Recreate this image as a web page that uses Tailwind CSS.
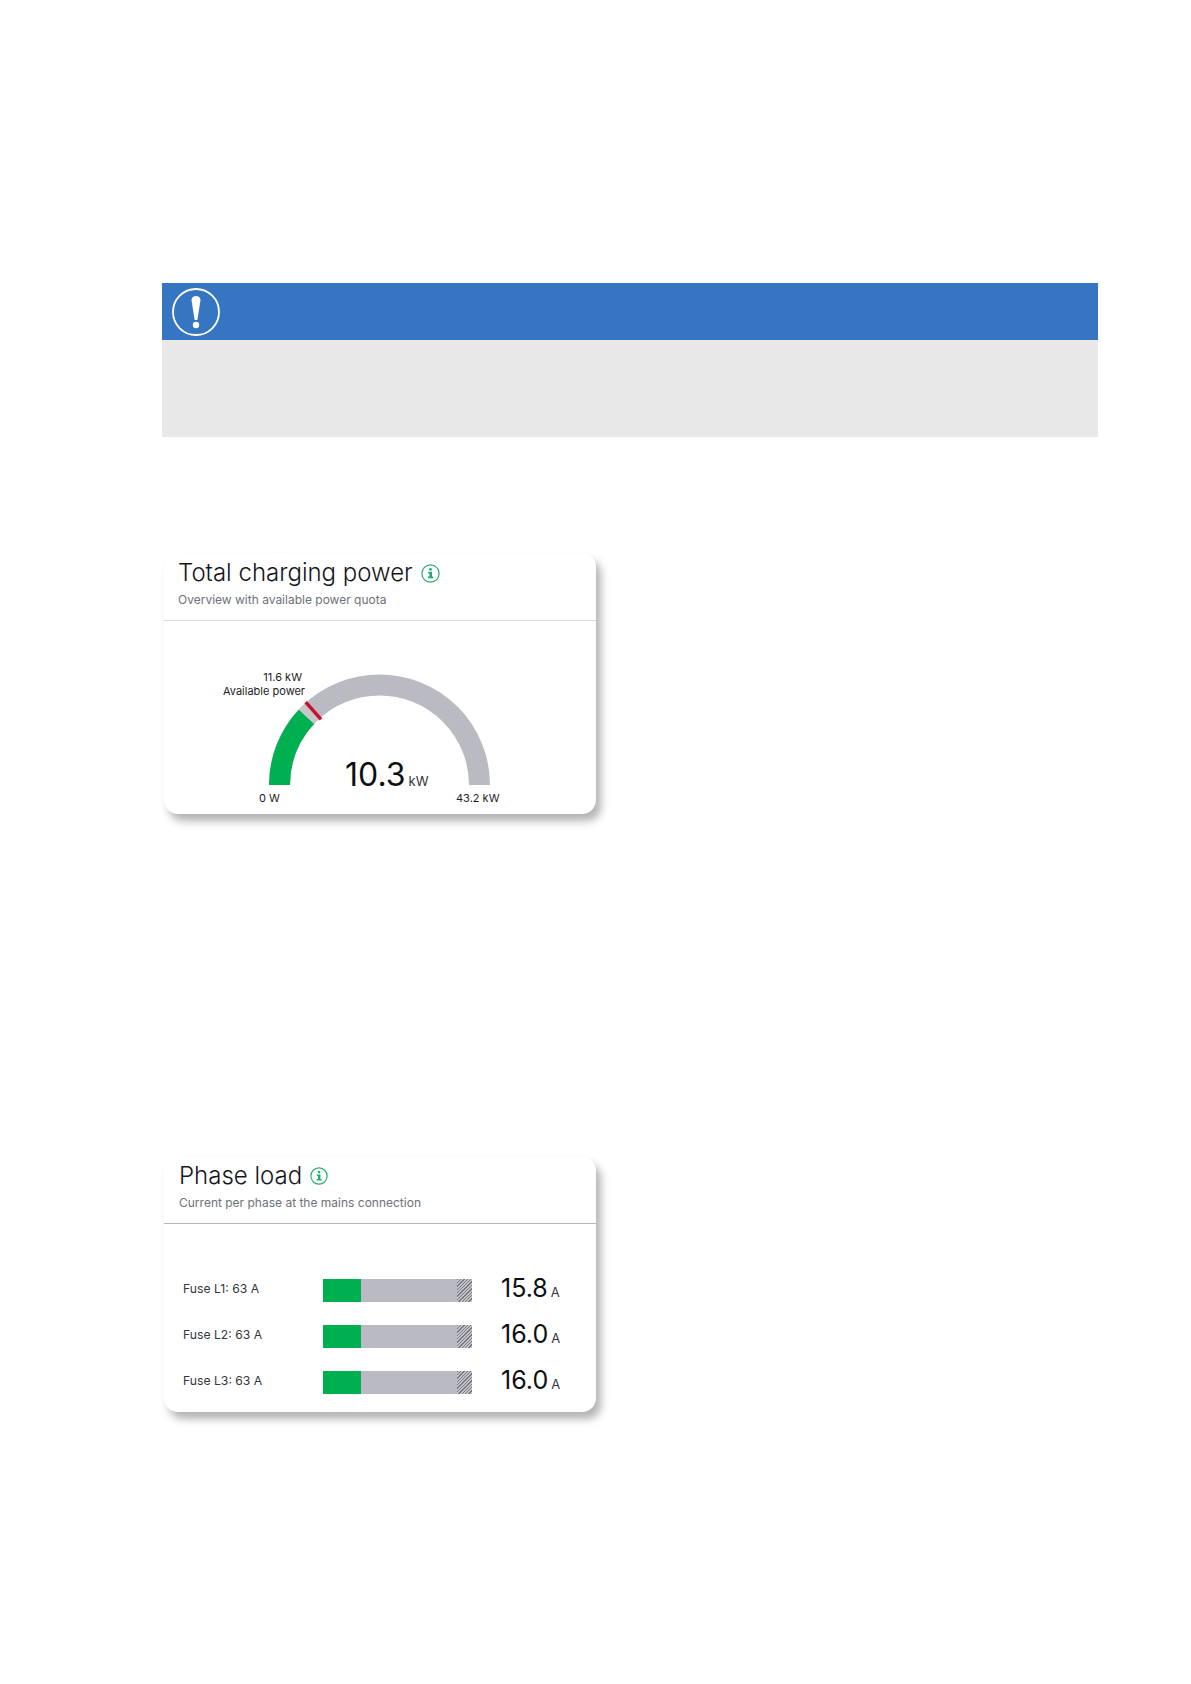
<!DOCTYPE html>
<html lang="en">
<head>
    <meta charset="UTF-8">
    <meta name="viewport" content="width=device-width, initial-scale=1.0">
    <title>Charging dashboard</title>
    <script src="https://cdn.jsdelivr.net/npm/@tailwindcss/browser@4"></script>
</head>
<body class="bg-white font-['Inter',sans-serif] h-[1684px] overflow-hidden pl-[162px] pt-[283px]">
    <!-- Notice -->
    <div class="w-[936px]">
        <div class="h-[57px] bg-[#3575c2] flex items-center pl-[10px]">
            <svg class="w-[48px] h-[48px]" viewBox="0 0 48 48">
                <circle cx="24" cy="24" r="23" fill="none" stroke="#fff" stroke-width="1.8"/>
                <path d="M19.5 12 C19.5 6.5 28.5 6.5 28.5 12 L25.4 32 H22.6 Z" fill="#fff"/>
                <circle cx="24" cy="37" r="3.2" fill="#fff"/>
            </svg>
        </div>
        <div class="h-[97px] bg-[#e8e8e8]"></div>
    </div>

    <!-- Total charging power -->
    <div class="mt-[116px] ml-[2px] w-[432px] h-[261px] bg-white rounded-[14px] shadow-[5px_7px_9px_rgba(0,0,0,0.3)]">
        <div class="h-[68px] border-b border-[#d9d9dc] pl-[14px] pt-[4px]">
            <div class="flex items-center h-[32px] gap-[8px]">
                <h2 class="text-[24px] font-light text-[#14161c] leading-[32px]">Total charging power</h2>
                <svg class="w-[19px] h-[19px]" viewBox="0 0 19 19">
                    <circle cx="9.5" cy="9.5" r="8.6" fill="none" stroke="#1fae6e" stroke-width="1.2"/>
                    <circle cx="9.5" cy="5.4" r="1.4" fill="#1fae6e"/>
                    <path d="M7.2 7.8 H11 V12.6 H12.2 V14.2 H7 V12.6 H8.4 V9.4 H7.2 Z" fill="#1fae6e"/>
                </svg>
            </div>
            <p class="text-[12px] text-[#6d7178] leading-[16px] mt-[3px]">Overview with available power quota</p>
        </div>
        <div class="relative h-[193px]">
            <svg class="absolute left-[105px] top-[54px] w-[221px] h-[110px] overflow-visible" viewBox="0 0 221 110">
                <path d="M10.5 110 A100 100 0 0 1 210.5 110" fill="none" stroke="#b9bac2" stroke-width="21"/>
                <path d="M37.4 41.8 A100 100 0 0 1 44.2 35.3" fill="none" stroke="#c6c7cc" stroke-width="21"/>
                <path d="M10.5 110 A100 100 0 0 1 37.4 41.8" fill="none" stroke="#00b050" stroke-width="21"/>
                <line x1="36.7" y1="27.1" x2="52" y2="44.3" stroke="#c8102e" stroke-width="3.4"/>
            </svg>
            <div class="absolute right-[291px] top-[49px] text-right text-[11px] leading-[14px] text-[#1b1d22] whitespace-nowrap">
                <div class="pr-[3px]">11.6 kW</div>
                <div>Available power</div>
            </div>
            <div class="absolute left-[181px] top-[134px] flex items-baseline gap-[3px] text-[#0d0f14]">
                <span class="text-[32px] leading-[40px]">10.3</span>
                <span class="text-[13px] text-[#33363c]">kW</span>
            </div>
            <span class="absolute left-[95px] top-[170px] text-[11px] leading-[15px] text-[#1b1d22]">0 W</span>
            <span class="absolute left-[292px] top-[170px] text-[11px] leading-[15px] text-[#1b1d22]">43.2 kW</span>
        </div>
    </div>

    <!-- Phase load -->
    <div class="mt-[343px] ml-[2px] w-[432px] h-[255px] bg-white rounded-[14px] shadow-[5px_7px_9px_rgba(0,0,0,0.3)]">
        <div class="h-[67px] border-b border-[#b5b6ba] pl-[15px] pt-[3px]">
            <div class="flex items-center h-[32px] gap-[8px]">
                <h2 class="text-[24px] font-light text-[#14161c] leading-[32px]">Phase load</h2>
                <svg class="w-[18px] h-[18px]" viewBox="0 0 19 19">
                    <circle cx="9.5" cy="9.5" r="8.6" fill="none" stroke="#1fae6e" stroke-width="1.2"/>
                    <circle cx="9.5" cy="5.4" r="1.4" fill="#1fae6e"/>
                    <path d="M7.2 7.8 H11 V12.6 H12.2 V14.2 H7 V12.6 H8.4 V9.4 H7.2 Z" fill="#1fae6e"/>
                </svg>
            </div>
            <p class="text-[12px] text-[#6d7178] leading-[16px] mt-[3px]">Current per phase at the mains connection</p>
        </div>
        <div class="pt-[55px] pl-[19px] flex flex-col gap-[23px]">
            <div class="flex items-center h-[23px]">
                <span class="w-[140px] text-[12.2px] text-[#33363c] -mt-[2px]">Fuse L1: 63 A</span>
                <div class="flex w-[149px] h-[23px] bg-[#b9bac2]">
                    <div class="w-[38px] bg-[#00b050]"></div>
                    <div class="ml-auto w-[15px] bg-[repeating-linear-gradient(135deg,#77787e_0,#77787e_1px,#c4c5ca_1px,#c4c5ca_2.4px)]"></div>
                </div>
                <div class="ml-[29px] flex items-baseline gap-[3px] -mt-[5px] text-[#0d0f14]">
                    <span class="text-[25px] leading-[30px]">15.8</span>
                    <span class="text-[13px] text-[#33363c]">A</span>
                </div>
            </div>
            <div class="flex items-center h-[23px]">
                <span class="w-[140px] text-[12.2px] text-[#33363c] -mt-[2px]">Fuse L2: 63 A</span>
                <div class="flex w-[149px] h-[23px] bg-[#b9bac2]">
                    <div class="w-[38px] bg-[#00b050]"></div>
                    <div class="ml-auto w-[15px] bg-[repeating-linear-gradient(135deg,#77787e_0,#77787e_1px,#c4c5ca_1px,#c4c5ca_2.4px)]"></div>
                </div>
                <div class="ml-[29px] flex items-baseline gap-[3px] -mt-[5px] text-[#0d0f14]">
                    <span class="text-[25px] leading-[30px]">16.0</span>
                    <span class="text-[13px] text-[#33363c]">A</span>
                </div>
            </div>
            <div class="flex items-center h-[23px]">
                <span class="w-[140px] text-[12.2px] text-[#33363c] -mt-[2px]">Fuse L3: 63 A</span>
                <div class="flex w-[149px] h-[23px] bg-[#b9bac2]">
                    <div class="w-[38px] bg-[#00b050]"></div>
                    <div class="ml-auto w-[15px] bg-[repeating-linear-gradient(135deg,#77787e_0,#77787e_1px,#c4c5ca_1px,#c4c5ca_2.4px)]"></div>
                </div>
                <div class="ml-[29px] flex items-baseline gap-[3px] -mt-[5px] text-[#0d0f14]">
                    <span class="text-[25px] leading-[30px]">16.0</span>
                    <span class="text-[13px] text-[#33363c]">A</span>
                </div>
            </div>
        </div>
    </div>
</body>
</html>
